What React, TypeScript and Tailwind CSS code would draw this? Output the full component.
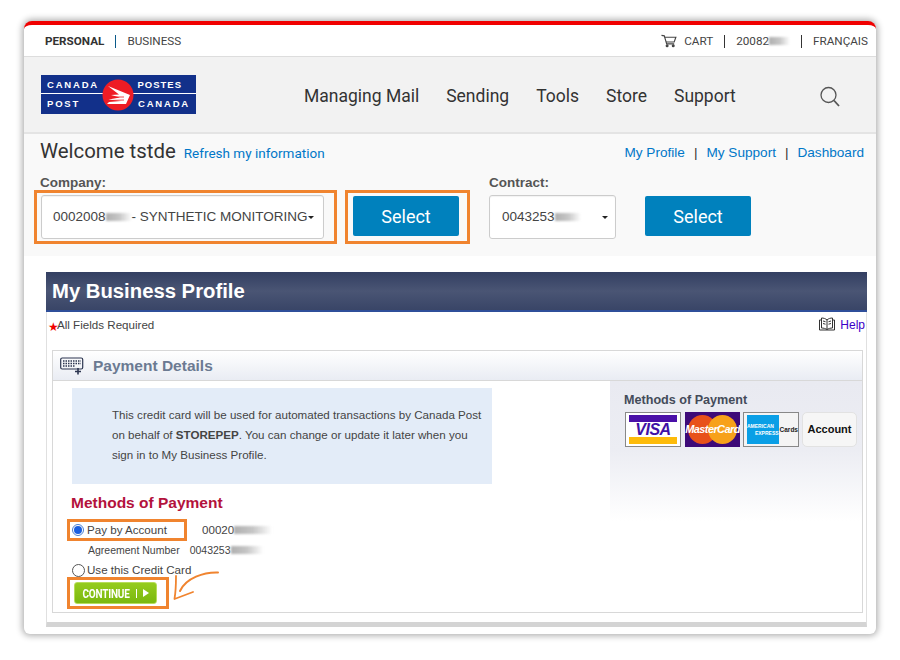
const Blur = ({ w }: { w: number }) => (
  <span className="inline-block h-[8px] align-middle bg-gradient-to-r from-[#b0b0b0] via-[#c6c6c6] to-transparent blur-[1px]" style={{ width: w }} />
);

function Logo() {
  const cell = "text-white font-bold text-[9.5px] tracking-[1.8px] leading-none";
  return (
    <div className="relative w-[155px] h-[39px] bg-[#12308a] flex flex-col font-['Liberation_Sans',sans-serif]">
      <div className="h-[19px] border-b border-white flex items-center justify-between pl-[6px] pr-[14px] pt-[2px]">
        <span className={cell}>CANADA</span>
        <span className="text-white font-bold text-[9.5px] tracking-[1px] leading-none">POSTES</span>
      </div>
      <div className="h-[20px] flex items-center justify-between pl-[6px] pr-[6px]">
        <span className={cell}>POST</span>
        <span className={cell}>CANADA</span>
      </div>
      <svg className="absolute left-[61px] top-[4px]" width="32" height="32" viewBox="0 0 32 32">
        <circle cx="16" cy="16" r="15.5" fill="#ee1c25" />
        <path d="M6 7 L28 16 L24 25 L5 25 L7 23 L19 22 L6.5 20.5 L18 18.5 L9 16 L17 15.5 Z" fill="#fff" />
        <path d="M7 21.5 L22 21 M8 18 L22 18" stroke="#ee1c25" strokeWidth="0.8" />
      </svg>
    </div>
  );
}

function Cart() {
  return (
    <svg width="16" height="14" viewBox="0 0 17 14" fill="none" stroke="#444" strokeWidth="1.2">
      <path d="M0.5 1 L3.5 1.5 L6 10 L14 10" />
      <path d="M3.8 3 L15.8 3 L14 8 L5.3 8" />
      <circle cx="6.5" cy="12" r="1" fill="#444" />
      <circle cx="13" cy="12" r="1" fill="#444" />
    </svg>
  );
}

function SelectBox({ className, children }: { className: string; children: React.ReactNode }) {
  return (
    <div className={`h-[44px] bg-white border border-[#ccc] rounded-[3px] flex items-center text-[13.5px] text-[#444] font-['Liberation_Sans',sans-serif] whitespace-nowrap shadow-[inset_0_1px_1px_rgba(0,0,0,0.05)] ${className}`}>
      {children}
      <span className="ml-auto w-0 h-0 border-x-[3px] border-x-transparent border-t-[3px] border-t-[#222]" />
    </div>
  );
}

const SelectBtn = () => (
  <div className="w-[106px] h-[40px] bg-[#0081bd] rounded-[2px] flex items-center justify-center text-white text-[18px] font-['Roboto',sans-serif]">
    Select
  </div>
);

export default function App() {
  const divider = <span className="w-px h-[13px] bg-[#333]" />;
  return (
    <div className="w-[900px] h-[660px] bg-white pt-[21px] px-[24px] font-['Liberation_Sans',sans-serif] overflow-hidden">
      <div className="relative w-[852px] h-[613px] bg-white border-t-[4px] border-[#f00000] rounded-t-[8px] rounded-b-[6px] shadow-[0_0_6px_2px_rgba(0,0,0,0.3)] overflow-hidden">
        {/* top bar */}
        <div className="h-[32px] pt-[2px] flex items-center justify-between pl-[21px] pr-[8px] border-b border-[#ddd] text-[11.7px] text-[#444] font-['Roboto',sans-serif]">
          <div className="flex items-center gap-[11px]">
            <span className="font-bold text-[#333]">PERSONAL</span>
            <span className="w-px h-[13px] bg-[#0a5a8a]" />
            <span>BUSINESS</span>
          </div>
          <div className="flex items-center gap-[11px]">
            <div className="flex items-center gap-[7px]"><Cart /><span>CART</span></div>
            {divider}
            <span className="flex items-center">20082<Blur w={21} /></span>
            {divider}
            <span>FRANÇAIS</span>
          </div>
        </div>
        {/* nav */}
        <div className="h-[77px] bg-[#f2f2f2] border-b-2 border-[#e4e4e4] flex items-center pl-[17px]">
          <Logo />
          <nav className="ml-[108px] mt-[3px] flex items-center gap-[27px] text-[17.5px] text-[#333] font-['Roboto',sans-serif]">
            <span>Managing Mail</span>
            <span>Sending</span>
            <span>Tools</span>
            <span>Store</span>
            <span>Support</span>
          </nav>
          <svg className="ml-[83px] mt-[4px]" width="22" height="22" viewBox="0 0 22 22" fill="none" stroke="#555" strokeWidth="1.3">
            <circle cx="9.5" cy="9" r="7.5" />
            <path d="M15 14.5 L20 20" strokeWidth="1.8" />
          </svg>
        </div>
        {/* welcome */}
        <div className="h-[122px] bg-[#f9f9f9] pl-[10px] pr-[12px]">
          <div className="h-[35px] flex items-center justify-between pl-[6px]">
            <div className="flex items-baseline gap-[8px]">
              <span className="text-[20.4px] text-[#333] font-['Roboto',sans-serif]">Welcome tstde</span>
              <span className="text-[13.5px] text-[#0077c8] font-['Roboto',sans-serif]">Refresh my information</span>
            </div>
            <div className="flex items-center gap-[9px] mt-[3px] text-[13.6px] text-[#0077c8]">
              <span>My Profile</span><span className="text-[#333]">|</span>
              <span>My Support</span><span className="text-[#333]">|</span>
              <span>Dashboard</span>
            </div>
          </div>
          <div className="flex">
            <div className="w-[303px]">
              <div className="pl-[6px] h-[21px] text-[13.5px] font-bold text-[#555] leading-[28px]">Company:</div>
              <div className="w-[303px] h-[54px] border-[3px] border-[#f0842f] pl-[4px] pt-[2px]">
                <SelectBox className="w-[283px] pl-[11px] pr-[10px]">
                  <span className="flex items-center">0002008<Blur w={26} />- SYNTHETIC MONITORING</span>
                </SelectBox>
              </div>
            </div>
            <div className="ml-[8px] mt-[21px] w-[125px] h-[54px] border-[3px] border-[#f0842f] pl-[5px] pt-[3px]">
              <SelectBtn />
            </div>
            <div className="ml-[19px]">
              <div className="h-[21px] text-[13.5px] font-bold text-[#555] leading-[28px]">Contract:</div>
              <div className="pt-[5px]">
                <SelectBox className="w-[127px] pl-[12px] pr-[7px]">
                  <span className="flex items-center">0043253<Blur w={26} /></span>
                </SelectBox>
              </div>
            </div>
            <div className="ml-[29px] mt-[27px]"><SelectBtn /></div>
          </div>
        </div>
        {/* profile */}
        <div className="px-[22px] pt-[16px]">
          <div className="w-[821px] h-[355px] border-x border-[#e0e0e0] border-b-[5px] border-b-[#d4d4d4]">
            <div className="h-[40px] -mx-px bg-gradient-to-b from-[#333f62] via-[#4a5574] to-[#394567] border-b-2 border-[#2f4f9a] flex items-center pl-[6px] text-white text-[20.3px] font-bold">
              My Business Profile
            </div>
            <div className="h-[38px] flex justify-between pl-px pr-[1px] pt-[4px] text-[11.6px]">
              <div className="flex items-start text-[#444]">
                <span className="text-[#f00000] text-[12px] leading-[16px] mt-[3px]">★</span>
                <span className="-ml-[2px]">All Fields Required</span>
              </div>
              <div className="flex items-start gap-[5px]">
                <svg className="mt-[1px]" width="16" height="14" viewBox="0 0 16 14" fill="none" stroke="#333" strokeWidth="1">
                  <path d="M8 3 C6.5 1.5 4.5 1 2.5 1 L2.5 11 C4.5 11 6.5 11.5 8 12.5 C9.5 11.5 11.5 11 13.5 11 L13.5 1 C11.5 1 9.5 1.5 8 3 Z M8 3 L8 12.5" />
                  <path d="M2.5 3 L0.5 3 L0.5 13 L15.5 13 L15.5 3 L13.5 3 M4 4 L6.5 4.7 M4 6.5 L6.5 7.2 M9.5 4.7 L12 4 M9.5 7.2 L12 6.5" />
                </svg>
                <span className="text-[#3a00c8] text-[12px]">Help</span>
              </div>
            </div>
            <div className="mx-[5px] w-[811px] h-[263px] border border-[#d8d8d8]">
              <div className="h-[30px] bg-gradient-to-b from-white to-[#e9ecf3] border-b border-[#d8d8d8] flex items-center pl-[7px] gap-[9px]">
                <svg width="24" height="18" viewBox="0 0 24 18" fill="none" stroke="#2c3550" strokeWidth="1.2">
                  <rect x="0.7" y="1" width="22" height="11" rx="1.5" />
                  <path d="M3 4 H21 M3 6.5 H21 M3 9 H15" strokeDasharray="1.5 1" strokeWidth="1.4" />
                  <path d="M18 11 V17.5 M15 14.5 H21" strokeWidth="1.6" />
                </svg>
                <span className="text-[15.5px] font-bold text-[#6b7a92]">Payment Details</span>
              </div>
              <div className="flex h-[231px]">
                <div className="w-[557px] pl-[19px] pt-[7px]">
                  <div className="w-[420px] h-[96px] bg-[#e3ecf8] pl-[40px] pr-[8px] pt-[17px] text-[11.6px] leading-[20px] text-[#444]">
                    This credit card will be used for automated transactions by Canada Post on behalf of <b>STOREPEP</b>. You can change or update it later when you sign in to My Business Profile.
                  </div>
                  <div className="mt-[10px] -ml-[1px] text-[15.5px] leading-[18px] font-bold text-[#b3123c]">Methods of Payment</div>
                  <div className="mt-[7px] -ml-[5px] flex items-center text-[11.6px] text-[#444]">
                    <div className="w-[120px] h-[22px] border-[3px] border-[#f0842f] flex items-center pl-[2px] gap-[3px]">
                      <span className="w-[12px] h-[12px] rounded-full border border-[#4a7fd0] bg-white flex items-center justify-center">
                        <span className="w-[8px] h-[8px] rounded-full bg-[#1a5fe0]" />
                      </span>
                      <span>Pay by Account</span>
                    </div>
                    <span className="ml-[15px] flex items-center">00020<Blur w={38} /></span>
                  </div>
                  <div className="mt-[2px] pl-[16px] flex items-center text-[10.5px] leading-[14px] text-[#444]">
                    <span>Agreement Number</span>
                    <span className="ml-[10px] flex items-center">0043253<Blur w={32} /></span>
                  </div>
                  <div className="mt-[6px] flex items-center gap-[2px] text-[11.6px] leading-[14px] text-[#444]">
                    <span className="w-[13px] h-[13px] rounded-full border border-[#555] bg-white" />
                    <span>Use this Credit Card</span>
                  </div>
                  <div className="relative -ml-[5px] w-[102px] h-[32px] border-[3px] border-[#f0842f] pl-[4px] pt-[2px]">
                    <div className="w-[83px] h-[22px] rounded-[3px] bg-gradient-to-b from-[#95cc1e] to-[#7ab80e] border border-[#b6dd5a] flex items-center justify-center gap-[6px] text-white font-['Roboto',sans-serif]">
                      <span className="text-[10px] font-bold tracking-[-0.2px] scale-y-125">CONTINUE</span>
                      <span className="w-px h-[9px] bg-white" />
                      <span className="w-0 h-0 border-y-[4px] border-y-transparent border-l-[6px] border-l-white" />
                    </div>
                    <svg className="absolute left-[102px] -top-[9px]" width="50" height="34" viewBox="0 0 50 34" fill="none" stroke="#f0842f">
                      <path d="M46 1.5 C32 1 14 7 8 20" strokeWidth="2" strokeLinecap="round" />
                      <path d="M4 5 C4 14 3.5 22 2.5 28 L21 21" strokeWidth="1.8" strokeLinecap="round" strokeLinejoin="round" />
                    </svg>
                  </div>
                </div>
                <div className="w-[252px] h-[140px] bg-gradient-to-b from-[#e9eaf1] via-[#ecedf3] to-white pl-[14px] pt-[12px]">
                  <div className="text-[12.6px] leading-[15px] font-bold text-[#444b5a]">Methods of Payment</div>
                  <div className="mt-[4px] ml-[1px] flex gap-[3px]">
                    <div className="w-[56px] h-[35px] bg-white border border-[#888] px-[3px] py-[2px] flex flex-col justify-between items-stretch">
                      <div className="h-[7px] bg-[#4a10a8]" />
                      <div className="text-center italic font-bold text-[16px] leading-[15px] tracking-[-0.5px] text-[#3f12a6]">VISA</div>
                      <div className="h-[7px] bg-[#fdbb0a]" />
                    </div>
                    <div className="relative ml-[1px] w-[55px] h-[35px] bg-[#3d0a78] flex items-center justify-center overflow-hidden">
                      <span className="absolute left-[3px] top-[3px] w-[29px] h-[29px] rounded-full bg-[#e8511a]" />
                      <span className="absolute right-[3px] top-[3px] w-[29px] h-[29px] rounded-full bg-[#f7a11a]" />
                      <span className="relative text-white italic font-bold text-[11px] tracking-[-0.6px]">MasterCard</span>
                    </div>
                    <div className="w-[56px] h-[35px] bg-[#f4f4f4] border border-[#888] flex items-center pl-[3px] gap-[1px]">
                      <div className="w-[33px] h-[29px] bg-[#0a9fe6] flex flex-col justify-center text-white font-bold text-[5px] leading-[7px]">
                        <span>AMERICAN</span>
                        <span className="text-right">EXPRESS</span>
                      </div>
                      <span className="text-[6.5px] font-bold text-[#222]">Cards</span>
                    </div>
                    <div className="w-[55px] h-[35px] bg-[#f6f6f6] border border-[#e2e2e2] rounded-[5px] flex items-center justify-center text-[11px] font-bold text-[#111]">
                      Account
                    </div>
                  </div>
                </div>
              </div>
            </div>
          </div>
        </div>
      </div>
    </div>
  );
}
